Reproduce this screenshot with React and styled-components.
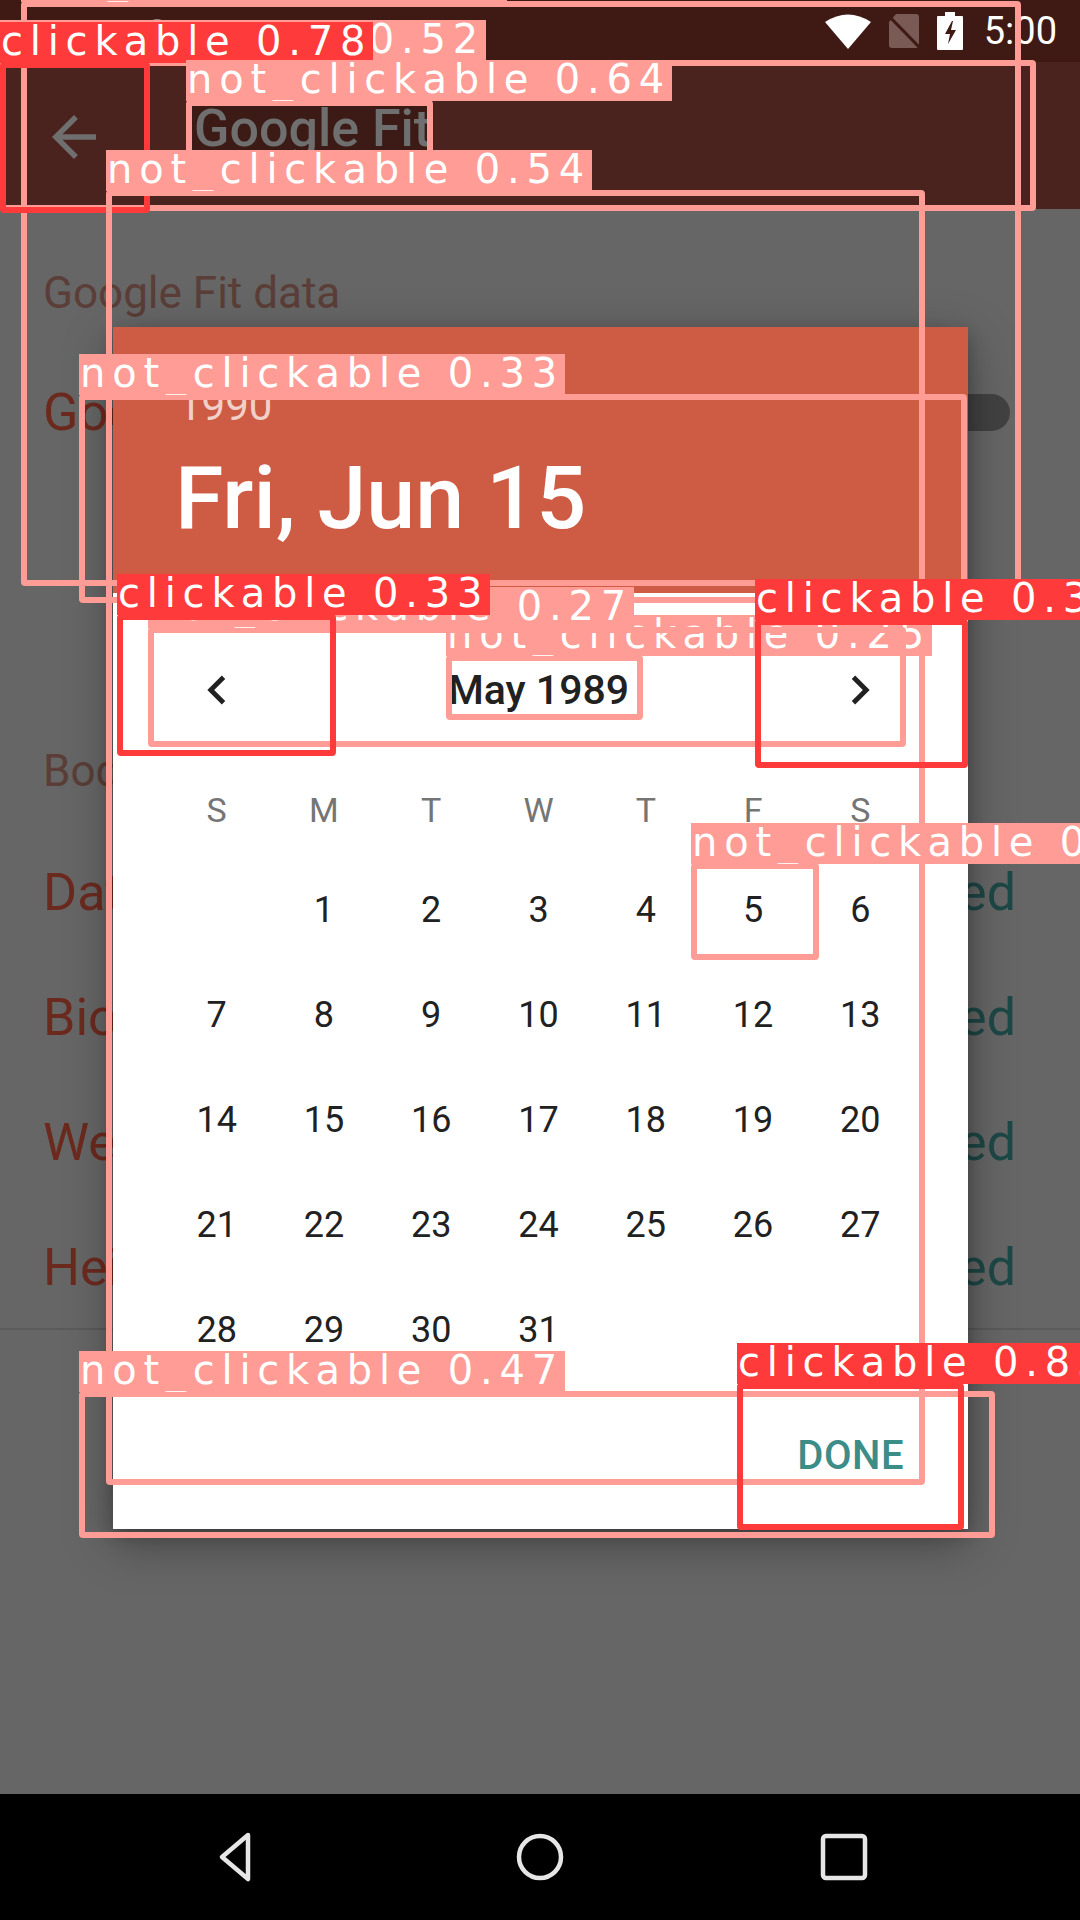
import React from "react";
import styled, { createGlobalStyle } from "styled-components";

const Global = createGlobalStyle`
  html, body { margin: 0; padding: 0; background: #000; }
  body { width: 1080px; height: 1920px; overflow: hidden; font-family: Roboto, "Noto Sans", sans-serif; }
  * { box-sizing: border-box; }
`;

const Screen = styled.div`
  position: relative;
  width: 1080px;
  height: 1920px;
  display: flex;
  flex-direction: column;
  overflow: hidden;
  background: #666666;
`;

/* ---------- status bar ---------- */
const StatusBar = styled.div`
  flex: none;
  height: 62px;
  background: #3f1a14;
  display: flex;
  align-items: center;
  justify-content: space-between;
  padding: 0 23px 0 36px;
`;
const StatusLeft = styled.div`
  display: flex;
  align-items: center;
  gap: 28px;
  color: #8c8c8c;
`;
const Fake = styled.span`
  font-size: 13px;
  font-weight: 700;
  color: #9a9a9a;
  margin-top: -14px;
`;
const StatusRight = styled.div`
  display: flex;
  align-items: center;
  gap: 17px;
`;
const Clock = styled.span`
  font-size: 38px;
  color: #fff;
  margin-left: 4px;
`;

/* ---------- app bar ---------- */
const AppBar = styled.div`
  flex: none;
  height: 147px;
  background: #4a231e;
  display: flex;
  align-items: flex-start;
  padding-left: 41px;
`;
const BackBtn = styled.div`
  width: 66px;
  height: 66px;
  margin-top: 42px;
  display: flex;
  align-items: center;
  justify-content: center;
`;
const Title = styled.div`
  margin-top: 41px;
  margin-left: 85px;
  height: 52px;
  line-height: 52px;
  padding: 0 2px;
  font-size: 52px;
  font-weight: 500;
  color: #6f6f6f;
  background: #3c1b16;
`;

/* ---------- settings list (dimmed) ---------- */
const Content = styled.div`
  flex: 1;
  display: flex;
  flex-direction: column;
  background: #666666;
`;
const Category = styled.div`
  padding: 59px 64px 0 43px;
  margin-top: ${(p) => p.$gap || 0}px;
  height: ${(p) => p.$h}px;
  line-height: 50px;
  font-size: 44px;
  font-weight: 400;
  color: #5a3e37;
`;
const Row = styled.div`
  height: 125px;
  display: flex;
  align-items: center;
  justify-content: space-between;
  padding: 0 64px 0 43px;
  font-size: 52px;
`;
const RowTitle = styled.span`
  color: #6c2a1f;
`;
const RowValue = styled.span`
  color: #1d4846;
`;
const Track = styled.div`
  width: 89px;
  height: 37px;
  border-radius: 19px;
  background: #424242;
  margin-right: 6px;
`;
const Divider = styled.div`
  height: 2px;
  background: #5a5a5a;
  margin-top: -2px;
`;

/* ---------- nav bar ---------- */
const NavBar = styled.div`
  flex: none;
  height: 126px;
  background: #000;
  display: flex;
  align-items: center;
  justify-content: center;
  gap: 240px;
`;
const NavSlot = styled.div`
  width: 64px;
  height: 64px;
  display: flex;
  align-items: center;
  justify-content: center;
`;

/* ---------- dialog ---------- */
const Dialog = styled.div`
  position: absolute;
  left: 113px;
  top: 327px;
  width: 855px;
  height: 1202px;
  background: #fff;
  display: flex;
  flex-direction: column;
  box-shadow: 0 14px 44px rgba(0, 0, 0, 0.35), 0 6px 14px rgba(0, 0, 0, 0.2);
`;
const Header = styled.div`
  flex: none;
  height: 266px;
  background: #ce5b44;
  padding: 54px 0 0 65px;
`;
const Year = styled.div`
  font-size: 42px;
  line-height: 50px;
  color: rgba(255, 255, 255, 0.72);
`;
const BigDate = styled.div`
  margin-top: 17px;
  margin-left: -3px;
  font-size: 88px;
  line-height: 100px;
  font-weight: 500;
  color: #fff;
`;
const Calendar = styled.div`
  padding: 37px 54px 0 50px;
  display: flex;
  flex-direction: column;
`;
const MonthNav = styled.div`
  height: 120px;
  display: grid;
  grid-template-columns: repeat(7, 1fr);
  align-items: center;
`;
const Chevron = styled.div`
  grid-column: ${(p) => p.$col};
  display: flex;
  justify-content: center;
`;
const MonthTitle = styled.div`
  grid-column: 2 / 7;
  text-align: center;
  font-size: 41px;
  font-weight: 500;
  color: #212121;
`;
const Grid = styled.div`
  margin-top: 12px;
  display: grid;
  grid-template-columns: repeat(7, 1fr);
  grid-template-rows: 95px repeat(5, 105px);
  align-items: center;
  justify-items: center;
`;
const WeekDay = styled.div`
  font-size: 34px;
  color: #757575;
`;
const Day = styled.div`
  font-size: 36px;
  color: #212121;
`;
const Footer = styled.div`
  flex: 1;
  display: flex;
  align-items: center;
  justify-content: flex-end;
  padding-right: 64px;
`;
const Done = styled.div`
  font-size: 40px;
  font-weight: 500;
  color: #3c8c88;
  letter-spacing: 0.5px;
`;

/* ---------- detection overlay ---------- */
const Overlay = styled.div`
  position: absolute;
  inset: 0;
  pointer-events: none;
`;
const Frame = styled.div.attrs((p) => ({
  style: { left: p.$x, top: p.$y, width: p.$w, height: p.$h },
}))`
  position: absolute;
  border: 6px solid ${(p) => (p.$red ? "#ff3a3a" : "#ff9c96")};
  border-radius: 4px;
`;
const Tag = styled.div.attrs((p) => ({
  style: { left: p.$x, top: p.$y },
}))`
  position: absolute;
  height: 41px;
  line-height: 39px;
  padding: 0 1px;
  overflow: hidden;
  background: ${(p) => (p.$red ? "#ff3a3a" : "#ff9c96")};
  color: #fff;
  font-family: "DejaVu Sans", sans-serif;
  font-size: 40px;
  letter-spacing: 6.8px;
  white-space: nowrap;
`;

const DET = [
  { x: 21, y: 1, w: 1000, h: 585, t: "not_clickable 0.41" },
  { x: 0, y: 60, w: 1036, h: 151, t: "not_clickable 0.52" },
  { x: 0, y: 62, w: 150, h: 151, t: "clickable 0.78", red: true },
  { x: 186, y: 100, w: 247, h: 58, t: "not_clickable 0.64" },
  { x: 106, y: 190, w: 819, h: 1295, t: "not_clickable 0.54" },
  { x: 79, y: 394, w: 888, h: 209, t: "not_clickable 0.33" },
  { x: 446, y: 655, w: 197, h: 65, t: "not_clickable 0.25" },
  { x: 148, y: 627, w: 758, h: 120, t: "not_clickable 0.27" },
  { x: 117, y: 614, w: 219, h: 142, t: "clickable 0.33", red: true },
  { x: 755, y: 619, w: 213, h: 149, t: "clickable 0.31", red: true },
  { x: 691, y: 863, w: 128, h: 97, t: "not_clickable 0.22" },
  { x: 79, y: 1391, w: 916, h: 147, t: "not_clickable 0.47" },
  { x: 737, y: 1383, w: 227, h: 147, t: "clickable 0.83", red: true },
];

const WEEK = ["S", "M", "T", "W", "T", "F", "S"];
const DAYS = [null, ...Array.from({ length: 31 }, (_, i) => i + 1)];

function ChevronIcon({ dir }) {
  return (
    <svg width="58" height="58" viewBox="0 0 24 24">
      <path
        fill="#212121"
        d={dir === "left" ? "M15.41 7.41L14 6l-6 6 6 6 1.41-1.41L10.83 12z" : "M8.59 16.59L13.17 12 8.59 7.41 10 6l6 6-6 6z"}
      />
    </svg>
  );
}

export default function App() {
  return (
    <>
      <Global />
      <Screen>
        <StatusBar>
          <StatusLeft>
            <svg width="28" height="30" viewBox="0 0 28 30"><path d="M2 4h24v4H16v20h-4V8H2z" fill="#8c8c8c" /></svg>
            <svg width="24" height="30" viewBox="0 0 24 30"><rect x="1" y="4" width="22" height="24" rx="2" fill="#b0b0b0" /></svg>
            <svg width="26" height="30" viewBox="0 0 26 30"><circle cx="13" cy="15" r="10" stroke="#8c8c8c" strokeWidth="4" fill="none" /></svg>
            <Fake>FAKE</Fake>
            <svg width="18" height="30" viewBox="0 0 18 30"><circle cx="9" cy="12" r="6" stroke="#9a9a9a" strokeWidth="3" fill="none" /></svg>
            <svg width="26" height="30" viewBox="0 0 26 30"><path d="M3 22a10 10 0 0 1 20 0z" fill="#9a9a9a" /><path d="M7 6l3 6M19 6l-3 6" stroke="#9a9a9a" strokeWidth="2" /></svg>
          </StatusLeft>
          <StatusRight>
            <svg width="46" height="36" viewBox="0 0 46 36"><path d="M0 9Q23 -6 46 9L23 36z" fill="#fff" /></svg>
            <svg width="32" height="36" viewBox="0 0 32 36"><path d="M8 1h20a3 3 0 0 1 3 3v28a3 3 0 0 1-3 3H4a3 3 0 0 1-3-3V9z" fill="#7a5a55" /><path d="M0 2l32 33" stroke="#3f1a14" strokeWidth="3" /></svg>
            <svg width="26" height="38" viewBox="0 0 26 38"><rect x="8" y="0" width="10" height="5" fill="#fff" /><rect x="0" y="4" width="26" height="34" rx="1" fill="#fff" /><path d="M15 9L8 22h5l-2 10 8-14h-5l2-9z" fill="#3f1a14" /></svg>
            <Clock>5:00</Clock>
          </StatusRight>
        </StatusBar>

        <AppBar>
          <BackBtn>
            <svg width="66" height="66" viewBox="0 0 24 24"><path fill="#6f6f6f" d="M20 11H7.83l5.59-5.59L12 4l-8 8 8 8 1.41-1.41L7.83 13H20v-2z" /></svg>
          </BackBtn>
          <Title>Google Fit</Title>
        </AppBar>

        <Content>
          <Category $h={141}>Google Fit data</Category>
          <Row>
            <RowTitle>Google Fit</RowTitle>
            <Track />
          </Row>
          <Category $gap={212} $h={143}>Body measurements</Category>
          <Row><RowTitle>Date of birth</RowTitle><RowValue>Disabled</RowValue></Row>
          <Row><RowTitle>Biological sex</RowTitle><RowValue>Disabled</RowValue></Row>
          <Row><RowTitle>Weight</RowTitle><RowValue>Disabled</RowValue></Row>
          <Row><RowTitle>Height</RowTitle><RowValue>Disabled</RowValue></Row>
          <Divider />
        </Content>

        <NavBar>
          <NavSlot>
            <svg width="44" height="52" viewBox="0 0 44 52"><path d="M34 4L8 26l26 22z" fill="none" stroke="#e6e6e6" strokeWidth="4.5" strokeLinejoin="round" /></svg>
          </NavSlot>
          <NavSlot>
            <svg width="52" height="52" viewBox="0 0 52 52"><circle cx="26" cy="26" r="21" fill="none" stroke="#e6e6e6" strokeWidth="4.5" /></svg>
          </NavSlot>
          <NavSlot>
            <svg width="48" height="48" viewBox="0 0 48 48"><rect x="3" y="3" width="42" height="42" rx="3" fill="none" stroke="#e6e6e6" strokeWidth="4.5" /></svg>
          </NavSlot>
        </NavBar>

        <Dialog>
          <Header>
            <Year>1990</Year>
            <BigDate>Fri, Jun 15</BigDate>
          </Header>
          <Calendar>
            <MonthNav>
              <Chevron $col={1}><ChevronIcon dir="left" /></Chevron>
              <MonthTitle>May 1989</MonthTitle>
              <Chevron $col={7}><ChevronIcon dir="right" /></Chevron>
            </MonthNav>
            <Grid>
              {WEEK.map((d, i) => (
                <WeekDay key={"w" + i}>{d}</WeekDay>
              ))}
              {DAYS.map((d, i) => (
                <Day key={"d" + i}>{d}</Day>
              ))}
            </Grid>
          </Calendar>
          <Footer>
            <Done>DONE</Done>
          </Footer>
        </Dialog>

        <Overlay>
          {DET.map((b, i) => (
            <React.Fragment key={i}>
              <Frame $x={b.x} $y={b.y} $w={b.w} $h={b.h} $red={b.red} />
              <Tag $x={b.x} $y={b.y - 40} $red={b.red}>{b.t}</Tag>
            </React.Fragment>
          ))}
        </Overlay>
      </Screen>
    </>
  );
}
